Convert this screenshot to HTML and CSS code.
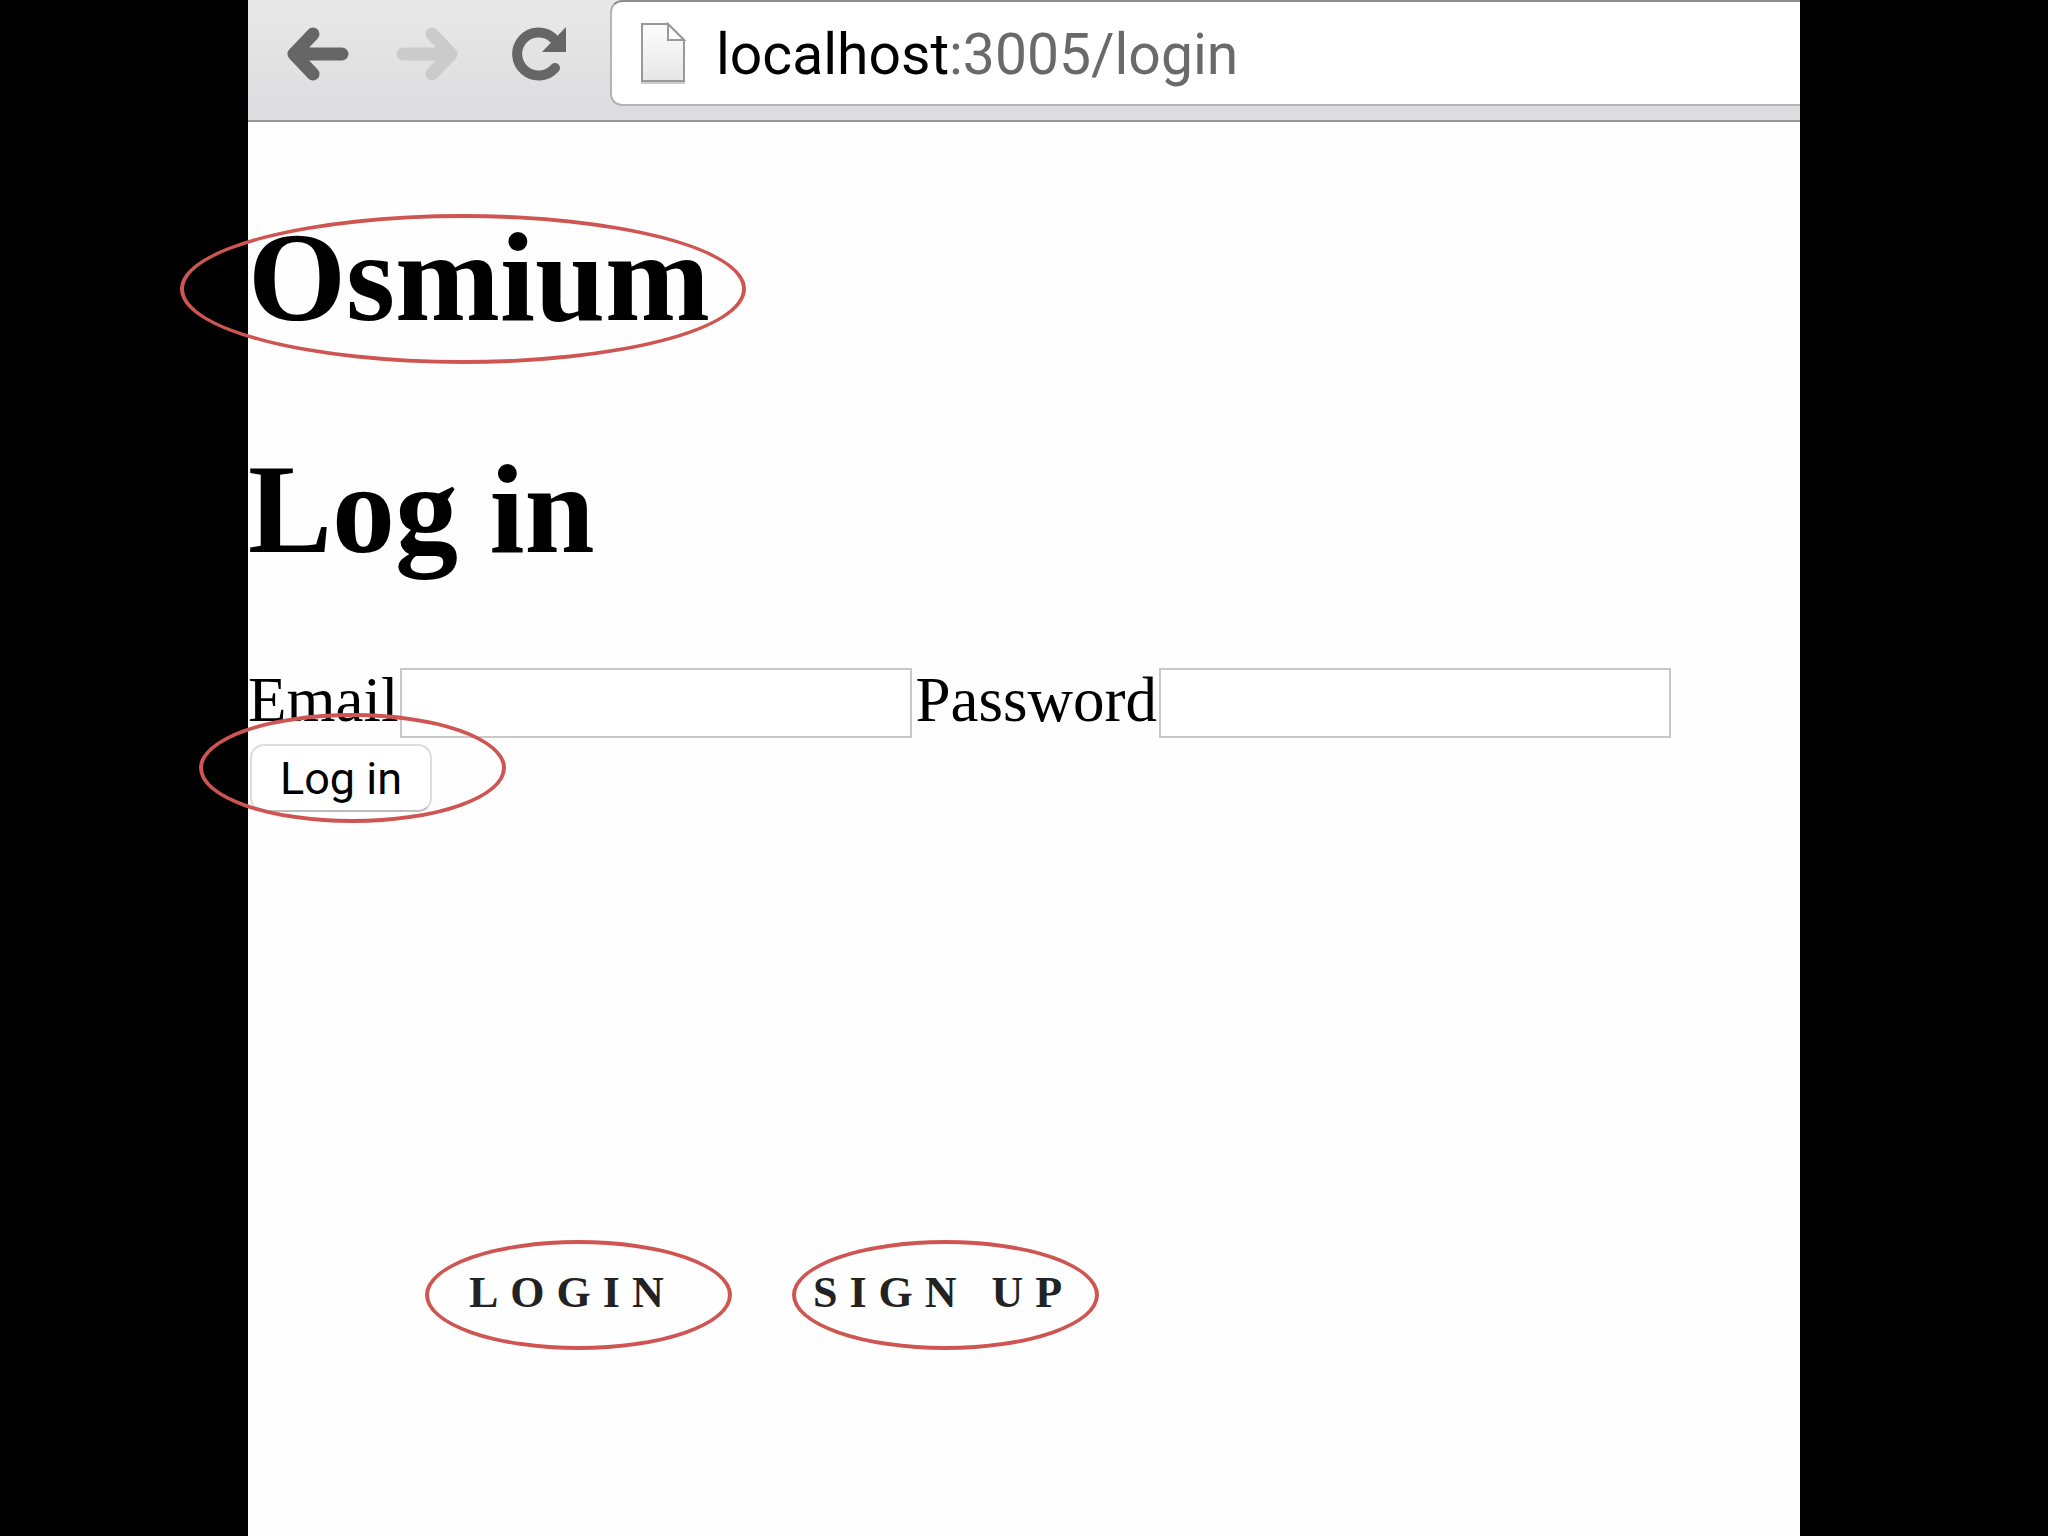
FILE: index.html
```
<!DOCTYPE html>
<html lang="en">

<head>

<meta charset="utf-8">
<title>Osmium - Log in</title>

<link rel="stylesheet" href="styles.css">

</head>

<body>

    <div class="window">

        <div class="toolbar">

            <button type="button" class="tool" aria-label="Back">
                <svg width="62" height="54" viewBox="0 0 62 54">
                    <path d="M26 7 L7 27 L26 47 M10 27 H55" fill="none" stroke="#666" stroke-width="13" stroke-linecap="round" stroke-linejoin="round"/>
                    <path d="M7 27 L22 11 V43 Z" fill="#666"/>
                </svg>
            </button>

            <button type="button" class="tool forward" aria-label="Forward" disabled>
                <svg width="62" height="54" viewBox="0 0 62 54">
                    <path d="M36 7 L55 27 L36 47 M52 27 H7" fill="none" stroke="#cbcbcb" stroke-width="13" stroke-linecap="round" stroke-linejoin="round"/>
                    <path d="M55 27 L40 11 V43 Z" fill="#cbcbcb"/>
                </svg>
            </button>

            <button type="button" class="tool reload" aria-label="Reload">
                <svg width="54" height="54" viewBox="0 0 54 54">
                    <path d="M43 41 A21.500 21.500 0 1 1 41 11" fill="none" stroke="#666" stroke-width="10" stroke-linecap="round"/>
                    <path d="M54 0 V25 H30 Z" fill="#666"/>
                </svg>
            </button>

            <div class="addressbar">
                <svg width="46" height="62" viewBox="0 0 46 62">
                    <defs>
                        <linearGradient id="paper" x1="0" y1="0" x2="0" y2="1">
                            <stop offset="0" stop-color="#fdfdfd"/>
                            <stop offset="1" stop-color="#e6e6e6"/>
                        </linearGradient>
                    </defs>
                    <path d="M2 2 H28 L44 18 V59 H2 Z" fill="url(#paper)" stroke="#999" stroke-width="2"/>
                    <path d="M28 2 V18 H44 Z" fill="#fff" stroke="#999" stroke-width="2"/>
                    <path d="M1 61 H45" stroke="#ccc" stroke-width="2"/>
                </svg>
                <div class="url"><span class="host">localhost</span>:3005/login</div>
            </div>

        </div>

        <div class="page">

            <h1><span class="circled title">Osmium</span></h1>

            <h1>Log in</h1>

            <form>
                <div class="fields">
                    <label for="email">Email</label>
                    <input type="email" id="email" name="email">
                    <label for="password">Password</label>
                    <input type="password" id="password" name="password">
                </div>
                <div class="circled submit">
                    <button type="submit">Log in</button>
                </div>
            </form>

            <nav class="links">
                <a href="#login" class="login">LOGIN</a>
                <a href="#signup" class="signup">SIGN UP</a>
            </nav>

        </div>

    </div>

</body>
</html>
```
FILE: styles.css
```
*, :after, :before {
    box-sizing: border-box;
}

body {
    margin: 0;
    padding: 0 248px;
    background: black;
    font-family: "Liberation Serif", "Times New Roman", serif;
    font-size: 63px;
    color: black;
}

.window {
    min-height: 100vh;
    background: #fefefe;
}

/* browser bar */

.toolbar {
    display: flex;
    align-items: flex-start;
    height: 122px;
    padding-left: 39px;
    background: linear-gradient(#e9e9e9, #dcdbdd);
    border-bottom: 2px solid #969496;
}

.tool {
    display: flex;
    margin: 27px 0 0;
    padding: 0;
    border: 0;
    background: none;
}

.forward {
    margin-left: 47px;
}

.reload {
    margin-left: 54px;
}

.addressbar {
    flex: 1;
    display: flex;
    align-items: center;
    height: 106px;
    margin-left: 44px;
    padding-left: 28px;
    background: white;
    border: 2px solid #b4b3b5;
    border-top-color: #8e8e8e;
    border-right: 0;
    border-radius: 12px 0 0 12px;
}

.url {
    margin-left: 30px;
    padding-top: 4px;
    font-family: Roboto, "Liberation Sans", sans-serif;
    font-size: 57px;
    line-height: 64px;
    white-space: nowrap;
    color: #6a6a6a;
}

.host {
    color: black;
}

/* login page */

.page {
    padding-top: 82px;
}

h1 {
    margin: 0 0 84px;
    font-size: 126px;
    line-height: 148px;
}

.fields {
    display: flex;
    align-items: flex-start;
}

label {
    line-height: 64px;
}

input {
    width: 512px;
    height: 70px;
    margin: 0 3px 0 2px;
    padding: 4px 8px;
    border: 2px solid #cac7cb;
    background: white;
    font-size: 44px;
}

.submit {
    display: block;
    width: 182px;
    margin: 6px 0 0 2px;
}

.submit button {
    display: block;
    width: 100%;
    height: 68px;
    padding: 0;
    border: 2px solid #dddde0;
    border-bottom-color: #bdbdbf;
    border-radius: 14px;
    background: white;
    font-family: Roboto, "Liberation Sans", sans-serif;
    font-size: 45px;
    color: black;
}

/* red rings */

.circled {
    position: relative;
}

.circled::after {
    content: "";
    position: absolute;
    border: 4px solid #cf5553;
    border-radius: 50%;
    pointer-events: none;
}

.title::after {
    left: -68px;
    top: 6px;
    width: 566px;
    height: 150px;
}

.submit::after {
    left: -51px;
    top: -31px;
    width: 307px;
    height: 110px;
}

.links {
    display: flex;
    gap: 60px;
    margin: 428px 0 0 177px;
}

.links a {
    width: 307px;
    height: 110px;
    border: 4px solid #cf5553;
    border-radius: 50%;
    font-size: 44px;
    font-weight: bold;
    line-height: 98px;
    letter-spacing: 12px;
    white-space: nowrap;
    text-decoration: none;
    color: #222;
}

.login {
    padding-left: 40px;
}

.signup {
    padding-left: 17px;
}
```
